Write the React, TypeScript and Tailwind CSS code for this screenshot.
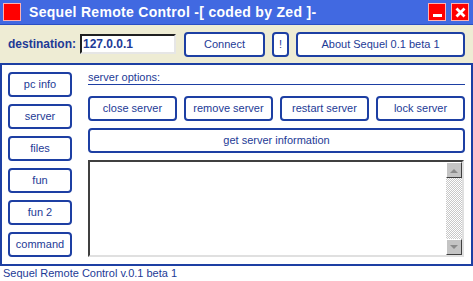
import React from 'react';

const font = { fontFamily: '"Liberation Sans", Arial, sans-serif' };

function Btn({ label, className = '' }: { label: string; className?: string }) {
  return (
    <button
      className={`h-[25px] rounded-[4px] border-2 border-[#1d3fa3] bg-white text-[11px] text-[#1d3a96] leading-none ${className}`}
    >
      {label}
    </button>
  );
}

function ScrollArrow({ up }: { up: boolean }) {
  return (
    <div className="w-[16px] h-[16px] bg-[#c4c4c4] border border-t-white border-l-white border-r-[#404040] border-b-[#404040] flex items-center justify-center">
      <svg width="8" height="5" viewBox="0 0 8 5">
        {up ? <path d="M0 5 L4 1 L8 5 Z" fill="#8a8a8a" /> : <path d="M0 0 L4 4 L8 0 Z" fill="#8a8a8a" />}
      </svg>
    </div>
  );
}

export default function App() {
  const sideItems = ['pc info', 'server', 'files', 'fun', 'fun 2', 'command'];
  const serverBtns = ['close server', 'remove server', 'restart server', 'lock server'];

  return (
    <div className="w-[473px] h-[281px] flex flex-col bg-white overflow-hidden" style={font}>
      {/* title bar */}
      <div className="h-[25px] bg-[#4169e1] border-b border-[#2a4fc4] flex items-center pl-[3px] pr-[4px]">
        <div className="w-[18px] h-[18px] bg-[#ff0000] border border-[#ffb0b0]" />
        <div className="ml-[8px] text-white font-bold text-[14px] tracking-[0.3px]">
          Sequel Remote Control -[ coded by Zed ]-
        </div>
        <div className="ml-auto flex gap-[5px]">
          <div className="w-[18px] h-[18px] bg-[#ff0000] border border-[#ffb0b0] flex items-end justify-center pb-[3px]">
            <div className="w-[9px] h-[3px] bg-white" />
          </div>
          <div className="w-[18px] h-[18px] bg-[#ff0000] border border-[#ffb0b0] flex items-center justify-center">
            <svg width="11" height="11" viewBox="0 0 11 11">
              <path d="M1.5 1.5 L9.5 9.5 M9.5 1.5 L1.5 9.5" stroke="white" strokeWidth="2.8" />
            </svg>
          </div>
        </div>
      </div>

      {/* destination toolbar */}
      <div className="h-[40px] bg-[#eeecd4] border-b-2 border-[#1d3fa3] flex items-center pl-[8px] pr-[8px]">
        <span className="text-[12px] font-bold text-[#1d3a96] w-[72px]">destination:</span>
        <div className="w-[96px] h-[20px] bg-white border-2 border-t-[#202020] border-l-[#202020] border-r-[#e6e6e6] border-b-[#e6e6e6] flex items-center pl-[1px] text-[12px] font-bold text-[#1d3a96]">
          127.0.0.1
        </div>
        <Btn label="Connect" className="w-[81px] ml-[8px]" />
        <Btn label="!" className="w-[17px] ml-[7px]" />
        <Btn label="About Sequel 0.1 beta 1" className="w-[169px] ml-[7px]" />
      </div>

      {/* main */}
      <div className="flex-1 flex border-l-2 border-r-2 border-b-2 border-[#1d3fa3]">
        <div className="flex flex-col gap-[7px] pl-[6px] pt-[7px]">
          {sideItems.map((s) => (
            <Btn key={s} label={s} className="w-[64px]" />
          ))}
        </div>
        <div className="ml-[16px] w-[377px] flex flex-col pt-[6px]">
          <div className="text-[11px] text-[#1d3a96] leading-[12px] border-b border-[#1d3fa3] pb-[1px]">
            server options:
          </div>
          <div className="flex gap-[7px] mt-[11px]">
            {serverBtns.map((s) => (
              <Btn key={s} label={s} className="w-[89px]" />
            ))}
          </div>
          <Btn label="get server information" className="w-[377px] mt-[7px]" />
          <div className="mt-[7px] w-[376px] h-[97px] flex border-2 border-t-[#404040] border-l-[#404040] border-r-[#e0e0e0] border-b-[#e0e0e0] bg-white">
            <div className="flex-1" />
            <div className="w-[16px] flex flex-col bg-[repeating-conic-gradient(#c8c8c8_0_25%,#ffffff_0_50%)] bg-size-[2px_2px]">
              <ScrollArrow up />
              <div className="flex-1" />
              <ScrollArrow up={false} />
            </div>
          </div>
        </div>
      </div>

      {/* status bar */}
      <div className="h-[15px] flex items-center pl-[3px] text-[11px] text-[#1d3a96] leading-none">
        Sequel Remote Control v.0.1 beta 1
      </div>
    </div>
  );
}
